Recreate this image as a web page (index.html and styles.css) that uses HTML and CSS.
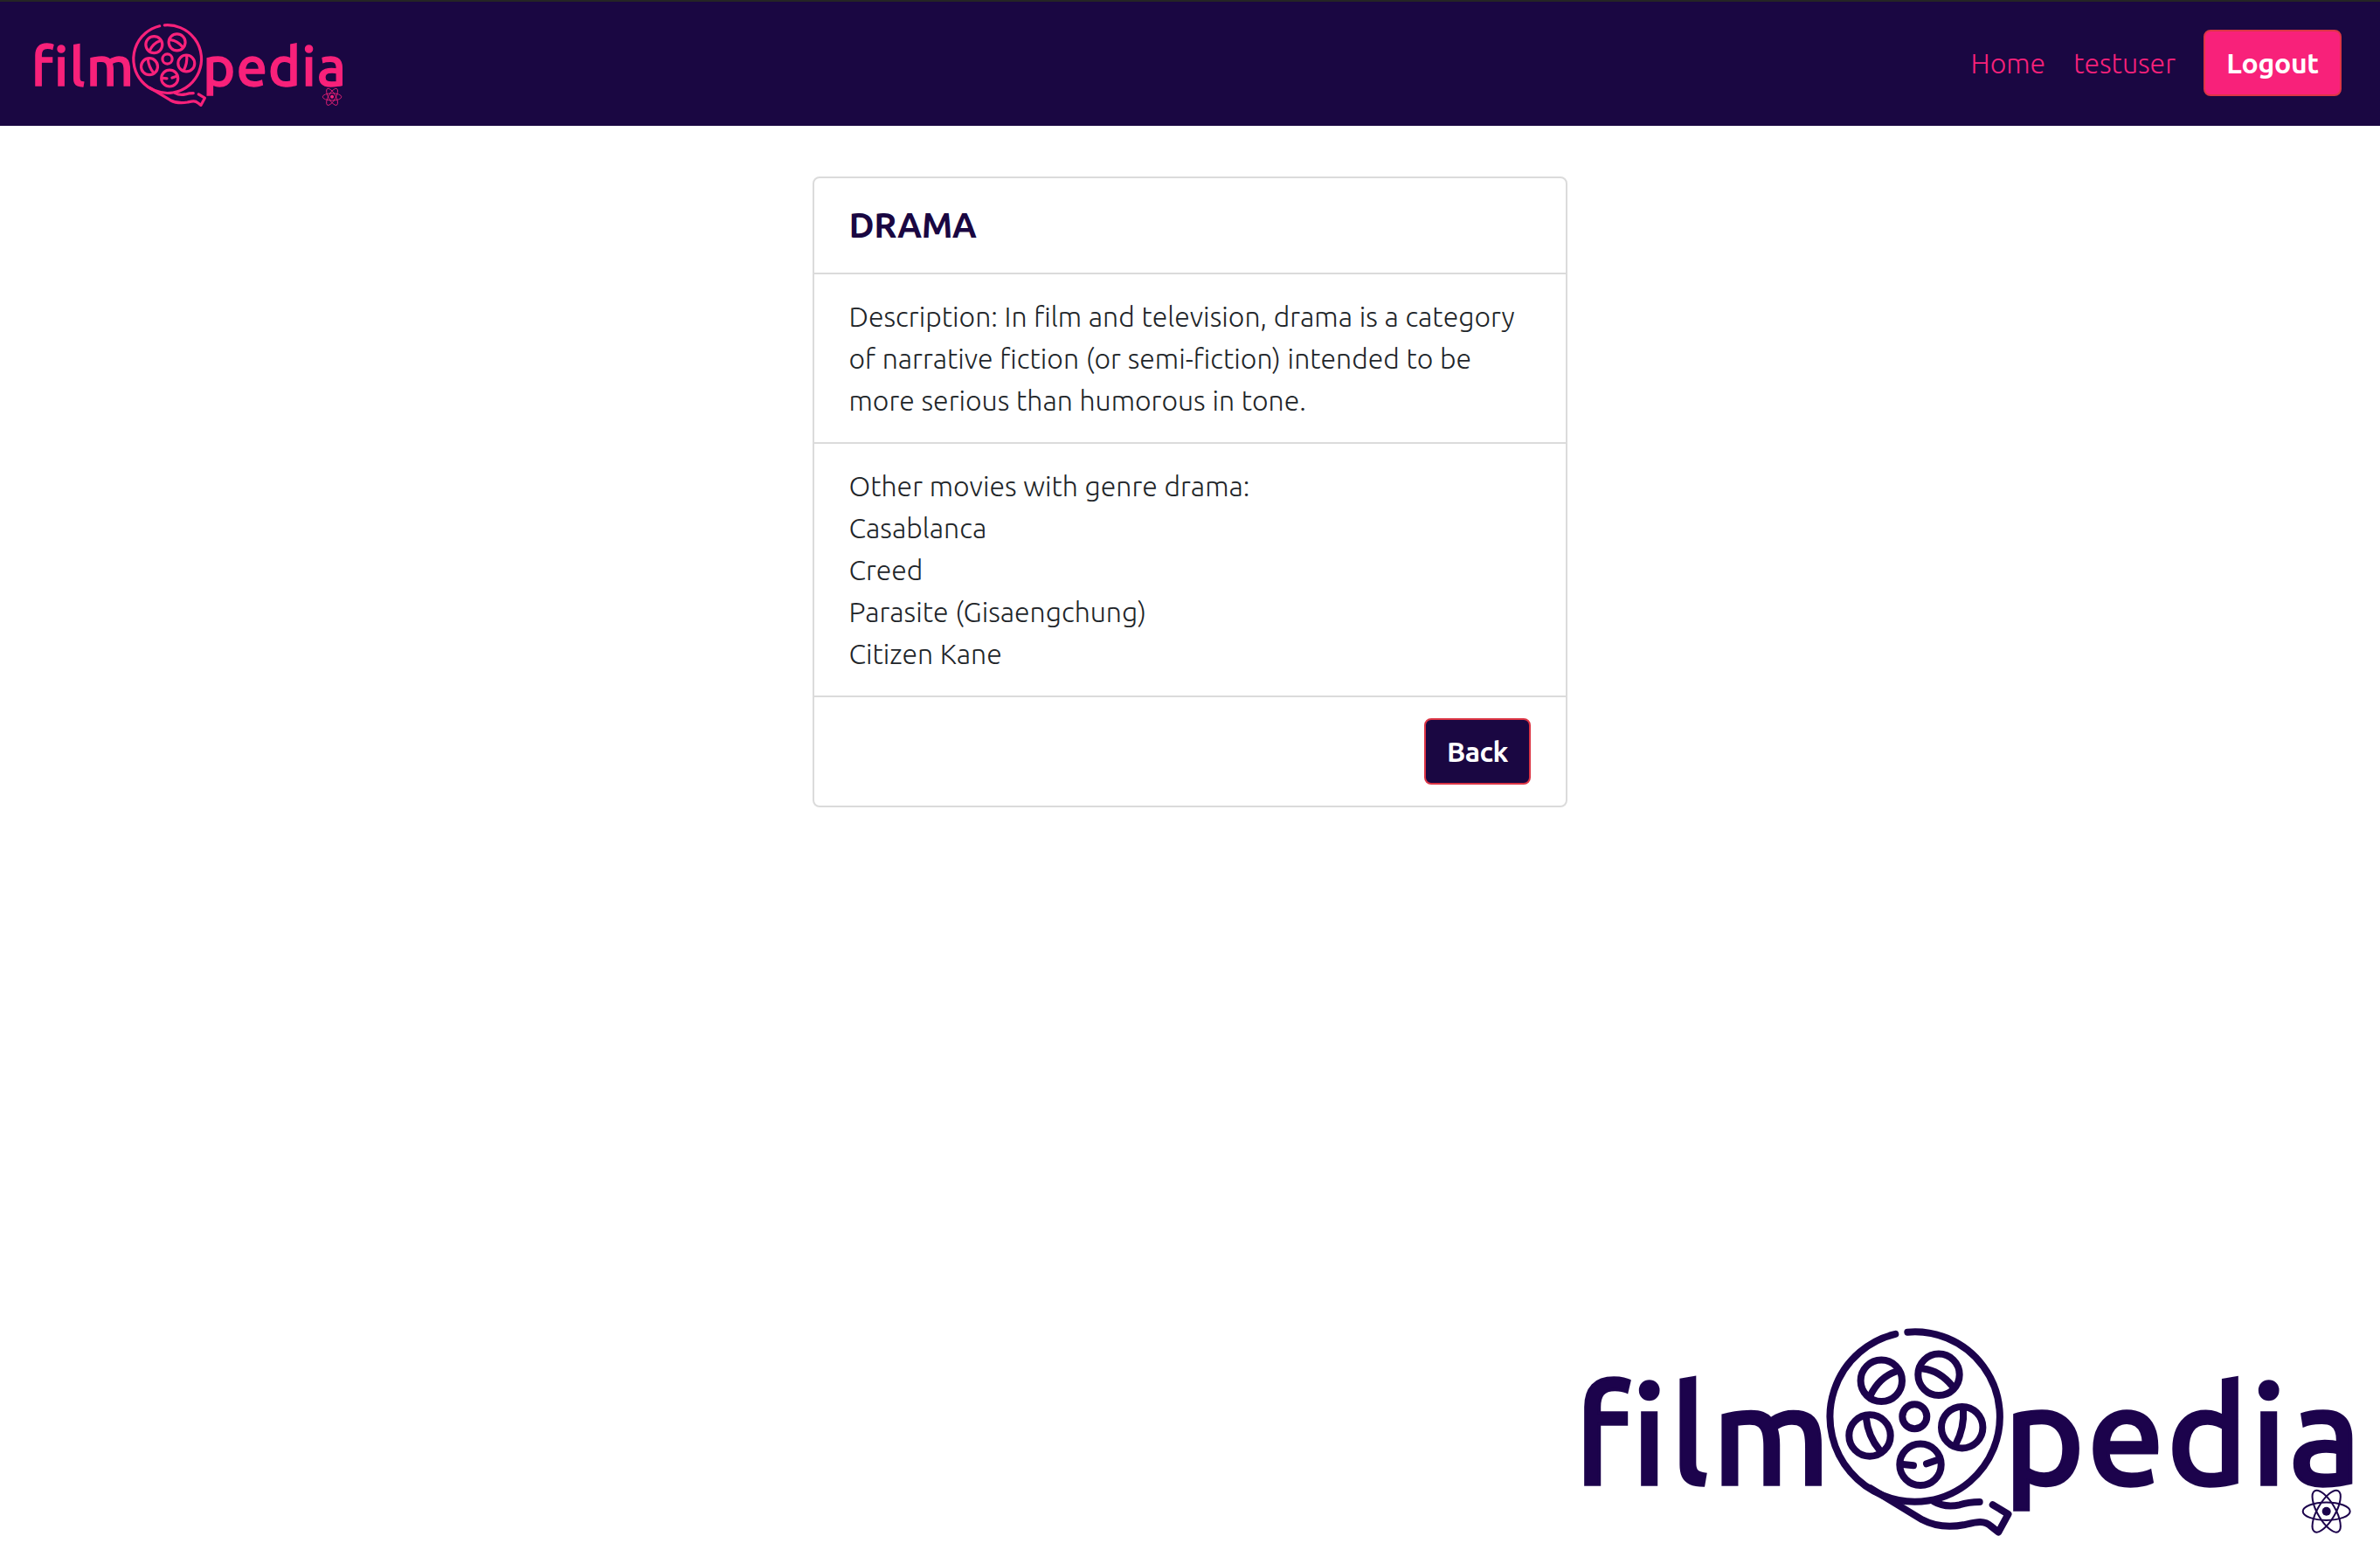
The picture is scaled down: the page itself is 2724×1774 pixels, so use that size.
FILE: index.html
```
<!DOCTYPE html>
<html lang="en">
<head>
  <meta charset="utf-8">
  <title>Filmopedia</title>
  <link rel="stylesheet" href="styles.css">
</head>
<body>
  <svg class="sprite" aria-hidden="true">
    <symbol id="logo" viewBox="0 0 934 274">
      <text class="logo-word" x="12.5 77.5 121.7 169.7" y="198.6">film</text>
      <text class="logo-word" x="503.4 599.1 690.1 786.5 829.8" y="198.6">pedia</text>
      <g class="reel">
        <path d="M393.3 24.65A97.2 97.2 0 1 1 379.3 26.9"/>
        <circle cx="401.3" cy="121.3" r="14"/>
        <circle cx="363.3" cy="80.3" r="23.7"/>
        <circle cx="429" cy="73.3" r="23.7"/>
        <circle cx="455.7" cy="133.7" r="23.7"/>
        <circle cx="408" cy="176.3" r="23.7"/>
        <circle cx="350" cy="143" r="23.7"/>
        <path d="M350.5 97.5Q361 76 380.5 69.5"/>
        <path d="M411 66.5Q430 68.5 445 87"/>
        <path d="M457 113Q458.5 134 448.5 153"/>
        <path d="M345.7 122Q348 144 361.5 160"/>
        <path d="M388 176L400 177.3M415 175.3L428 170.7"/>
        <path d="M351 203.3L410 239.3Q431 250.5 459 245C472 242 481 239.5 489 247L497.3 253.5L508.5 233L490.7 222.3"/>
        <path d="M423 218.3Q436 226 453 222.3Q463 219 475.7 219"/>
      </g>
      <g class="atom" transform="translate(872.7 229.7)">
        <ellipse rx="27" ry="10.2"/>
        <ellipse rx="27" ry="10.2" transform="rotate(60)"/>
        <ellipse rx="27" ry="10.2" transform="rotate(120)"/>
        <circle class="nucleus" r="5"/>
      </g>
    </symbol>
  </svg>

  <header class="navbar">
    <svg class="brand"><use href="#logo"/></svg>
    <nav class="nav">
      <a class="nav-link">Home</a>
      <a class="nav-link">testuser</a>
      <button class="btn btn-logout">Logout</button>
    </nav>
  </header>

  <main class="content">
    <section class="card">
      <h1 class="card-row title">DRAMA</h1>
      <p class="card-row">Description: In film and television, drama is a category of narrative fiction (or semi-fiction) intended to be more serious than humorous in tone.</p>
      <div class="card-row">
        Other movies with genre drama:
        <ul class="movies">
          <li>Casablanca</li>
          <li>Creed</li>
          <li>Parasite (Gisaengchung)</li>
          <li>Citizen Kane</li>
        </ul>
      </div>
      <div class="card-row actions"><button class="btn btn-back">Back</button></div>
    </section>
  </main>

  <footer class="footer">
    <svg class="footer-logo"><use href="#logo"/></svg>
  </footer>
</body>
</html>
```
FILE: styles.css
```
* { box-sizing: border-box; }

body {
  margin: 0;
  height: 1774px;
  display: flex;
  flex-direction: column;
  background: #fff;
  color: #212529;
  font: 300 32px/48px Ubuntu, "Noto Sans", sans-serif;
  word-spacing: 0.4px;
  overflow: hidden;
}

.sprite { display: none; }

.navbar {
  display: flex;
  align-items: center;
  justify-content: space-between;
  height: 144px;
  padding: 0 44px 2px 31px;
  border-top: 2px solid #252525;
  background: #1a0742;
}

.brand { width: 373.6px; height: 109.6px; margin-top: 3px; color: #f8217a; }

.nav { display: flex; align-items: center; gap: 32px; }
.nav-link { color: #f8217a; }

.btn {
  display: block;
  height: 76px;
  padding: 12px 23px;
  border: 2px solid #dc3545;
  border-radius: 8px;
  color: #fff;
  font: 700 32px/48px Ubuntu, "Noto Sans", sans-serif;
  letter-spacing: -0.3px;
}
.btn-logout { width: 158px; background: #f8217a; }
.btn-back { width: 122px; background: #1a0742; letter-spacing: -0.6px; }

.content { flex: 1; }

.card {
  width: 864px;
  margin: 58px auto 0;
  border: 2px solid #dbdbdb;
  border-radius: 8px;
}
.card-row { margin: 0; padding: 24px 39.5px; }
.card-row + .card-row { border-top: 2px solid #dbdbdb; }

.title { color: #1a0742; font-size: 40px; font-weight: 700; line-height: 60px; letter-spacing: -0.5px; }
.movies { margin: 0; padding: 0; list-style: none; }
.actions { display: flex; justify-content: flex-end; padding-right: 40px; }

.footer { display: flex; justify-content: flex-end; }
.footer-logo { width: 934px; height: 274px; color: #1c034c; }

.logo-word {
  fill: currentColor;
  stroke: currentColor;
  stroke-width: 3.4px;
  font: 500 156.5px Ubuntu, "Noto Sans", sans-serif;
}
.reel { fill: none; stroke: currentColor; stroke-width: 8; stroke-linecap: round; stroke-linejoin: round; }
.atom { fill: none; stroke: currentColor; stroke-width: 2; }
.nucleus { fill: currentColor; stroke: none; }
```
